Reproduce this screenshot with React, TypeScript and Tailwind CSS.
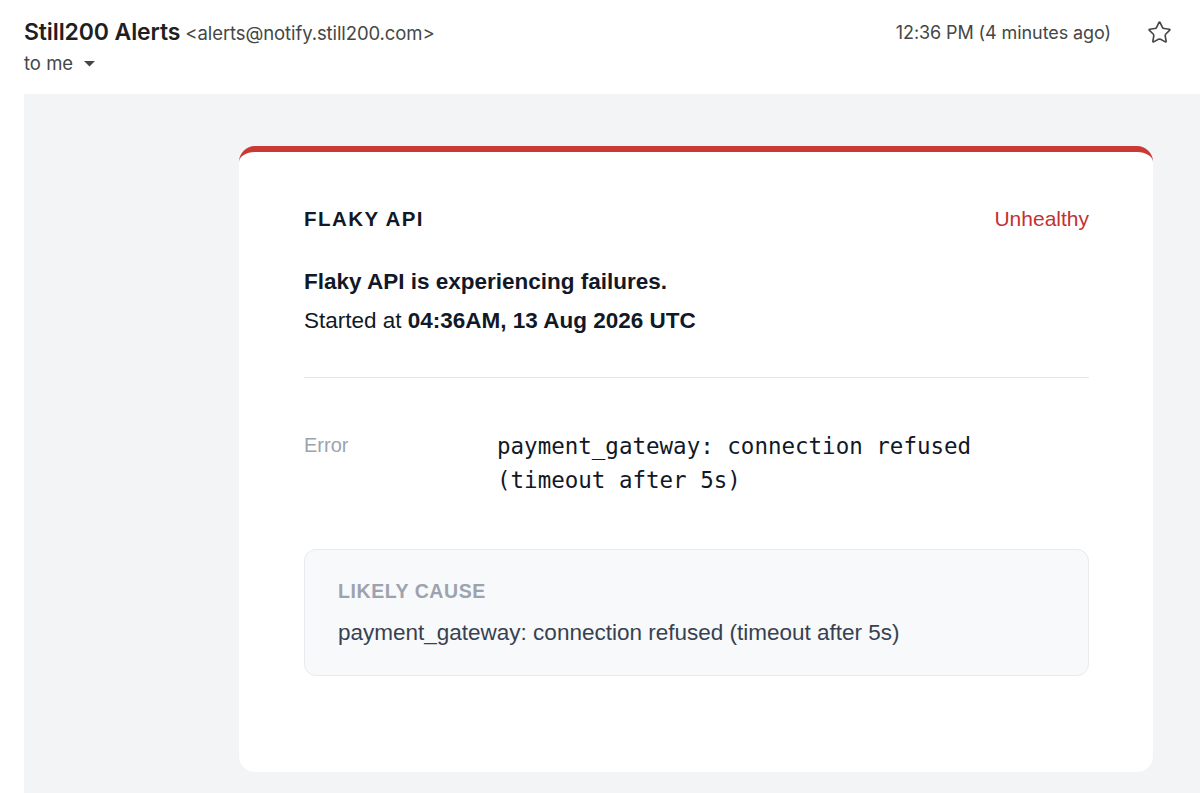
import { Star } from "lucide-react"

export default function App() {
  return (
    <div className="min-h-screen bg-white font-['Inter',sans-serif]">
      <div className="flex items-start justify-between pl-6 pr-[28px] pt-[18px]">
        <div>
          <div className="flex items-baseline gap-[5px] leading-[28px]">
            <span className="text-[23px] font-semibold tracking-[-0.005em] text-[#1f1f1f]">Still200 Alerts</span>
            <span className="text-[18.5px] tracking-[-0.005em] text-[#444746]">&lt;alerts@notify.still200.com&gt;</span>
          </div>
          <div className="mt-[4px] flex items-center gap-[11px] text-[18.5px] leading-[24px] text-[#444746]">
            <span>to me</span>
            <svg width="11" height="6" viewBox="0 0 11 6" className="mt-[1px]">
              <path d="M0 0h11L5.5 5.5z" fill="#444746" />
            </svg>
          </div>
        </div>
        <div className="flex items-center gap-[36px] pt-[2px]">
          <span className="text-[18px] leading-[24px] tracking-[-0.005em] text-[#444746]">12:36 PM (4 minutes ago)</span>
          <Star className="h-[25px] w-[25px] text-[#444746]" strokeWidth={1.6} />
        </div>
      </div>

      <div className="ml-6 mt-[19px] bg-[#f3f4f6] pb-[22px] pl-[215px] pr-[47px] pt-[52px] font-['Liberation_Sans',Arial,sans-serif]">
        <div className="rounded-[16px] border-t-[6px] border-[#c93a34] bg-white pb-[96px] pl-[65px] pr-[64px] pt-[53px]">
          <div className="flex items-center justify-between leading-[28px]">
            <span className="text-[20.5px] font-bold tracking-[0.07em] text-[#111827]">FLAKY API</span>
            <span className="text-[21px] text-[#c53030]">Unhealthy</span>
          </div>

          <p className="mt-[34px] text-[22.5px] font-bold leading-[30px] text-[#111827]">
            Flaky API is experiencing failures.
          </p>
          <p className="mt-[9px] text-[22.5px] leading-[30px] text-[#111827]">
            Started at <span className="font-bold">04:36AM, 13 Aug 2026 UTC</span>
          </p>

          <div className="mt-[41px] h-px bg-[#e5e7eb]" />

          <div className="mt-[51px] flex">
            <span className="w-[193px] shrink-0 pt-[2px] text-[20px] leading-[28px] text-[#9ca3af]">Error</span>
            <span className="font-['DejaVu_Sans_Mono',monospace] text-[22.5px] leading-[34px] text-[#111827]">
              payment_gateway: connection refused
              <br />
              (timeout after 5s)
            </span>
          </div>

          <div className="mt-[52px] rounded-[12px] border border-[#e8eaed] bg-[#f8f9fa] px-[33px] pb-[27px] pt-[28px]">
            <div className="text-[19.5px] font-bold leading-[26px] tracking-[0.03em] text-[#9ca3af]">LIKELY CAUSE</div>
            <div className="mt-[14px] text-[22.5px] leading-[30px] text-[#374151]">
              payment_gateway: connection refused (timeout after 5s)
            </div>
          </div>
        </div>
      </div>
    </div>
  )
}
